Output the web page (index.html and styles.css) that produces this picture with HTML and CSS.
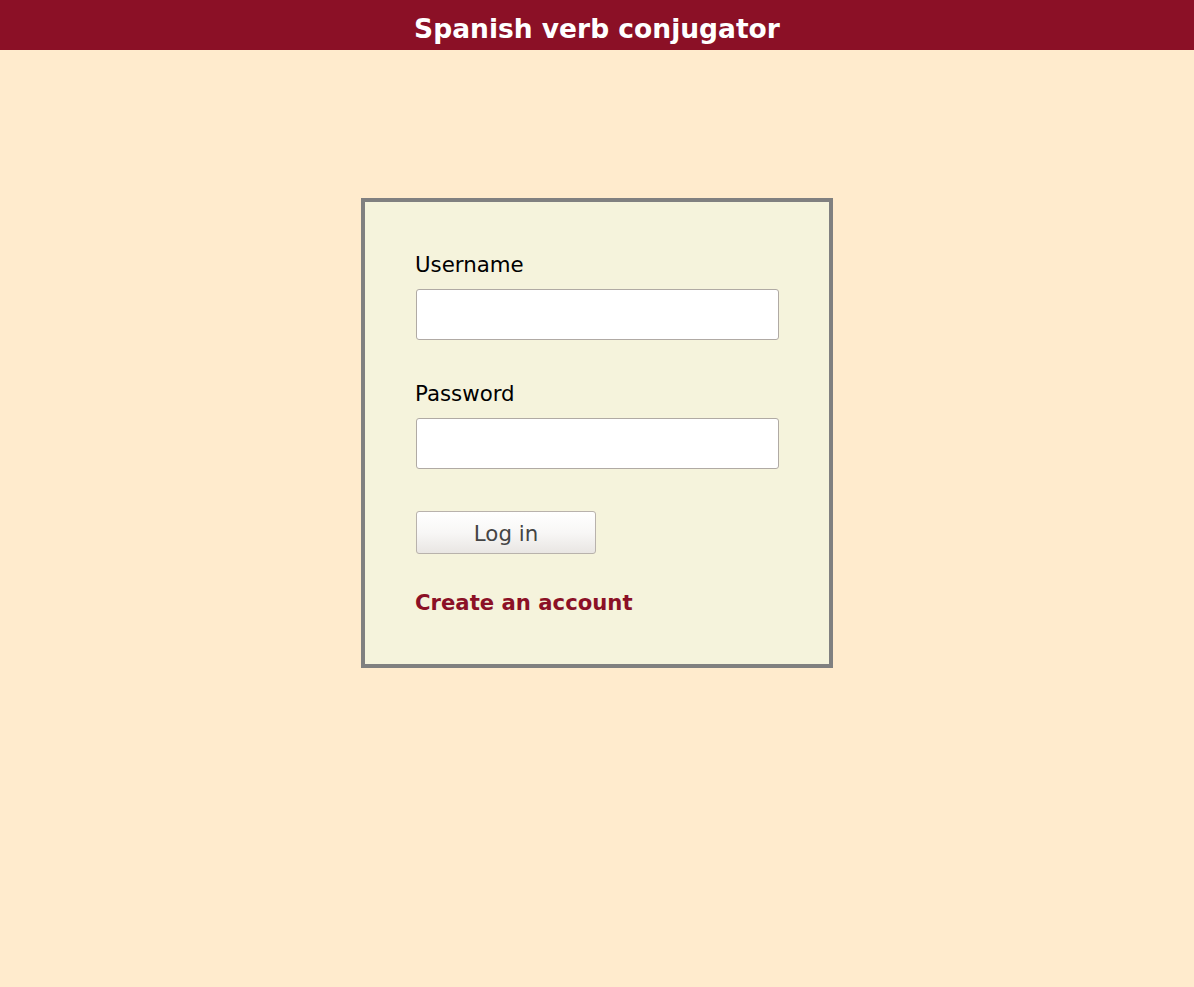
FILE: index.html
```html
<!DOCTYPE html>
<html>
<head>
<meta charset="utf-8">
<title>Spanish verb conjugator</title>
<link rel="stylesheet" href="styles.css">
</head>
<body>
<header class="topbar"><h1 class="title">Spanish verb conjugator</h1></header>
<main class="page">
  <form class="login-box">
    <label class="field-label" for="username">Username</label>
    <input class="text-input" id="username" type="text">
    <label class="field-label second" for="password">Password</label>
    <input class="text-input" id="password" type="password">
    <button class="login-btn" type="button">Log in</button>
    <a class="create-link" href="#">Create an account</a>
  </form>
</main>
</body>
</html>
```
FILE: styles.css
```css
html, body {
  margin: 0;
  padding: 0;
}
body {
  background: #ffebcd;
  font-family: "DejaVu Sans", sans-serif;
  min-height: 987px;
}
.topbar {
  background: #8b1026;
  height: 50px;
  display: flex;
  align-items: center;
  justify-content: center;
}
.title {
  margin: 0;
  color: #ffffff;
  font-size: 26.5px;
  font-weight: bold;
  line-height: 30px;
  padding-top: 8px;
}
.page {
  display: flex;
  justify-content: center;
  padding-top: 148px;
}
.login-box {
  width: 364px;
  border: 4px solid #808080;
  background: #f5f3dc;
  padding: 50px 50px 48px 50px;
  display: flex;
  flex-direction: column;
  align-items: flex-start;
}
.field-label {
  font-size: 21.33px;
  line-height: 26px;
  color: #000;
  margin-bottom: 11px;
}
.field-label.second {
  margin-top: 41px;
}
.text-input {
  box-sizing: border-box;
  width: 363px;
  height: 51px;
  margin: 0 0 0 1px;
  border: 1px solid #b0aaa4;
  border-radius: 3px;
  background: #fff;
  font-family: "DejaVu Sans", sans-serif;
  font-size: 18px;
  padding: 0 8px;
}
.login-btn {
  box-sizing: border-box;
  margin: 42px 0 0 1px;
  width: 180px;
  height: 43px;
  border: 1px solid #b8b2ac;
  border-radius: 3px;
  background: linear-gradient(#ffffff 0%, #f8f7f6 50%, #e9e6e3 100%);
  color: #444;
  font-family: "DejaVu Sans", sans-serif;
  font-size: 21.33px;
  padding: 2px 0 0 0;
}
.create-link {
  margin-top: 36px;
  color: #8b1026;
  font-size: 21.2px;
  font-weight: bold;
  line-height: 26px;
  text-decoration: none;
}
```
